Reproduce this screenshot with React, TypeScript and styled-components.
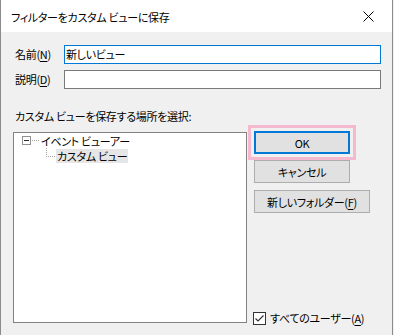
import styled, { createGlobalStyle } from 'styled-components';

const GlobalStyle = createGlobalStyle`
  html, body {
    margin: 0;
    padding: 0;
    background: #f0f0f0;
  }
  body {
    font-family: "Noto Sans CJK JP", "Noto Sans", sans-serif;
    font-size: 11px;
    color: #000;
  }
`;

const Window = styled.div`
  width: 393px;
  height: 335px;
  box-sizing: border-box;
  border-left: 1px solid #8c8c8c;
  border-right: 1px solid #8c8c8c;
  background: #f0f0f0;
  display: flex;
  flex-direction: column;
  font-feature-settings: "palt" 1;
  letter-spacing: -0.3px;
`;

const TitleBar = styled.div`
  height: 32px;
  flex-shrink: 0;
  background: #fff;
  display: flex;
  align-items: center;
  justify-content: space-between;
  padding-left: 10px;
`;

const Title = styled.span`
  font-size: 11px;
  line-height: 16px;
  padding-top: 2px;
`;

const CloseButton = styled.div`
  width: 46px;
  height: 32px;
  display: flex;
  align-items: center;
  justify-content: center;
  margin-right: 1px;
`;

const Body = styled.div`
  flex: 1;
  display: flex;
  flex-direction: column;
  padding: 13px 11px 12px 12px;
`;

const Form = styled.div`
  display: grid;
  grid-template-columns: 51px 1fr;
  row-gap: 6px;
  align-items: center;
`;

const Label = styled.label`
  padding-left: 2px;
  line-height: 19px;
  white-space: nowrap;
`;

const Key = styled.span`
  text-decoration: underline;
  text-underline-offset: 2px;
`;

const Input = styled.div<{ $focused?: boolean }>`
  height: 19px;
  box-sizing: border-box;
  border: 1px solid ${({ $focused }) => ($focused ? '#0078d7' : '#7a7a7a')};
  background: #fff;
  padding: 0 1px;
  line-height: 17px;
  white-space: nowrap;
`;

const SectionLabel = styled.div`
  margin-top: 19px;
  padding-left: 2px;
  line-height: 16px;
`;

const Main = styled.div`
  flex: 1;
  display: flex;
  margin-top: 8px;
`;

const Tree = styled.div`
  width: 234px;
  box-sizing: border-box;
  border: 1px solid #828282;
  background: #fff;
  padding: 0 0 0 8px;
`;

const TreeRow = styled.div<{ $indent?: number }>`
  height: 15px;
  display: flex;
  align-items: center;
  padding-left: ${({ $indent = 0 }) => $indent}px;
`;

const Expander = styled.div`
  width: 9px;
  height: 9px;
  box-sizing: border-box;
  border: 1px solid #919191;
  display: flex;
  align-items: center;
  justify-content: center;
  &::after {
    content: '';
    width: 5px;
    height: 1px;
    background: #2b2b2b;
  }
`;

const HLine = styled.div`
  width: 7px;
  border-top: 1px dotted #a0a0a0;
  margin: 0 1px 0 1px;
`;

const Elbow = styled.div`
  align-self: flex-start;
  width: 8px;
  height: 8px;
  border-left: 1px dotted #a0a0a0;
  border-bottom: 1px dotted #a0a0a0;
  margin-right: 1px;
`;

const NodeText = styled.span<{ $selected?: boolean }>`
  height: 14px;
  line-height: 14px;
  padding: 0 1px;
  background: ${({ $selected }) => ($selected ? '#e6e6e6' : 'transparent')};
  white-space: nowrap;
`;

const Side = styled.div`
  flex: 1;
  display: flex;
  flex-direction: column;
  align-items: flex-start;
  padding-left: 7px;
  margin-top: -1px;
`;

const Button = styled.div<{ $width?: number; $default?: boolean; $gap?: number }>`
  width: ${({ $width = 96 }) => $width}px;
  height: 23px;
  box-sizing: border-box;
  margin-top: ${({ $gap = 0 }) => $gap}px;
  background: #e1e1e1;
  border: 1px solid ${({ $default }) => ($default ? '#0078d7' : '#adadad')};
  box-shadow: ${({ $default }) =>
    $default ? 'inset 0 0 0 1px #0078d7, 0 0 0 3px #f0f0f0, 0 0 0 6px #f5b9cf' : 'none'};
  display: flex;
  align-items: center;
  justify-content: center;
  white-space: nowrap;
`;

const CheckRow = styled.div`
  margin-top: auto;
  margin-left: -1px;
  margin-bottom: -2px;
  display: flex;
  align-items: center;
  gap: 4px;
  line-height: 14px;
`;

const CheckBox = styled.div`
  width: 13px;
  height: 13px;
  box-sizing: border-box;
  border: 1px solid #333;
  background: #fff;
  display: flex;
  align-items: center;
  justify-content: center;
`;

export default function App() {
  return (
    <>
      <GlobalStyle />
      <Window>
        <TitleBar>
          <Title>フィルターをカスタム ビューに保存</Title>
          <CloseButton>
            <svg width="11" height="11" viewBox="0 0 11 11">
              <path d="M0.5 0.5 L10.5 10.5 M10.5 0.5 L0.5 10.5" stroke="#000" strokeWidth="1" fill="none" />
            </svg>
          </CloseButton>
        </TitleBar>
        <Body>
          <Form>
            <Label>名前(<Key>N</Key>)</Label>
            <Input $focused>新しいビュー</Input>
            <Label>説明(<Key>D</Key>)</Label>
            <Input />
          </Form>
          <SectionLabel>カスタム ビューを保存する場所を選択:</SectionLabel>
          <Main>
            <Tree>
              <TreeRow>
                <Expander />
                <HLine />
                <NodeText>イベント ビューアー</NodeText>
              </TreeRow>
              <TreeRow $indent={24}>
                <Elbow />
                <NodeText $selected>カスタム ビュー</NodeText>
              </TreeRow>
            </Tree>
            <Side>
              <Button $default>OK</Button>
              <Button $gap={6}>キャンセル</Button>
              <Button $gap={7} $width={116}>新しいフォルダー(<Key>F</Key>)</Button>
              <CheckRow>
                <CheckBox>
                  <svg width="11" height="11" viewBox="0 0 11 11">
                    <path d="M1.5 5.5 L4 8 L9.5 2.5" stroke="#333" strokeWidth="1.2" fill="none" />
                  </svg>
                </CheckBox>
                <span>すべてのユーザー(<Key>A</Key>)</span>
              </CheckRow>
            </Side>
          </Main>
        </Body>
      </Window>
    </>
  );
}
